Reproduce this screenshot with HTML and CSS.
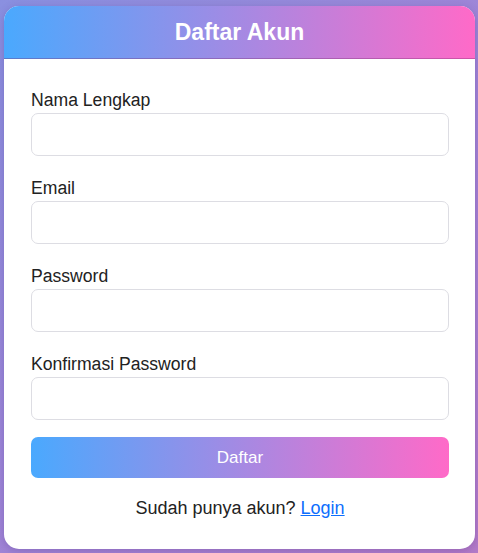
FILE: index.html
```html
<!DOCTYPE html>
<html lang="id">
<head>
<meta charset="utf-8">
<title>Daftar Akun</title>
<link rel="stylesheet" href="styles.css">
</head>
<body>
  <div class="card">
    <div class="card-header">Daftar Akun</div>
    <form class="card-body">
      <div class="form-group">
        <label class="form-label" for="nama">Nama Lengkap</label>
        <input class="form-input" id="nama" type="text">
      </div>
      <div class="form-group">
        <label class="form-label" for="email">Email</label>
        <input class="form-input" id="email" type="email">
      </div>
      <div class="form-group">
        <label class="form-label" for="pw">Password</label>
        <input class="form-input" id="pw" type="password">
      </div>
      <div class="form-group last">
        <label class="form-label" for="pw2">Konfirmasi Password</label>
        <input class="form-input" id="pw2" type="password">
      </div>
      <button class="btn" type="button">Daftar</button>
      <p class="footer">Sudah punya akun? <a href="#" class="link">Login</a></p>
    </form>
  </div>
</body>
</html>
```
FILE: styles.css
```css
* { box-sizing: border-box; }
html, body { margin: 0; padding: 0; }
body {
  min-height: 100vh;
  display: flex;
  align-items: center;
  justify-content: center;
  background: linear-gradient(135deg, #8a90e0 0%, #a184d6 55%, #b47bc8 100%);
  font-family: "Liberation Sans", Arial, sans-serif;
  color: #222;
  padding-top: 2px;
  padding-left: 1px;
}
.card {
  width: 471px;
  background: #fff;
  border-radius: 15px;
  overflow: hidden;
  box-shadow: 0 2px 8px rgba(60, 30, 120, 0.25);
}
.card-header {
  background: linear-gradient(to right, #4aa9fe 0%, #ff6ac8 100%);
  color: #fff;
  font-weight: bold;
  font-size: 23px;
  line-height: 26.5px;
  text-align: center;
  padding: 13px 0 13px;
  border-bottom: 1px solid rgba(120, 40, 110, 0.35);
}
.card-body {
  margin: 0;
  padding: 31px 26px 30px 27px;
}
.form-group { margin-bottom: 22.5px; }
.form-group.last { margin-bottom: 17px; }
.form-label {
  display: block;
  font-size: 17.6px;
  line-height: 20px;
  margin-bottom: 3px;
  color: #222;
}
.form-input {
  display: block;
  width: 100%;
  height: 42.5px;
  font-family: inherit;
  font-size: 16px;
  padding: 0 12px;
  border: 1px solid #dddde3;
  border-radius: 7px;
  background: #fff;
  outline: none;
}
.btn {
  display: block;
  width: 100%;
  height: 41.5px;
  border: none;
  border-radius: 7px;
  padding: 0;
  font-family: inherit;
  font-size: 17px;
  color: #fff;
  background: linear-gradient(to right, #4aa9fe 0%, #ff6ac8 100%);
  cursor: pointer;
}
.footer {
  margin: 20px 0 0;
  text-align: center;
  font-size: 18px;
  line-height: 21px;
  color: #222;
}
.link { color: #0d6efd; text-decoration: underline; }
```
